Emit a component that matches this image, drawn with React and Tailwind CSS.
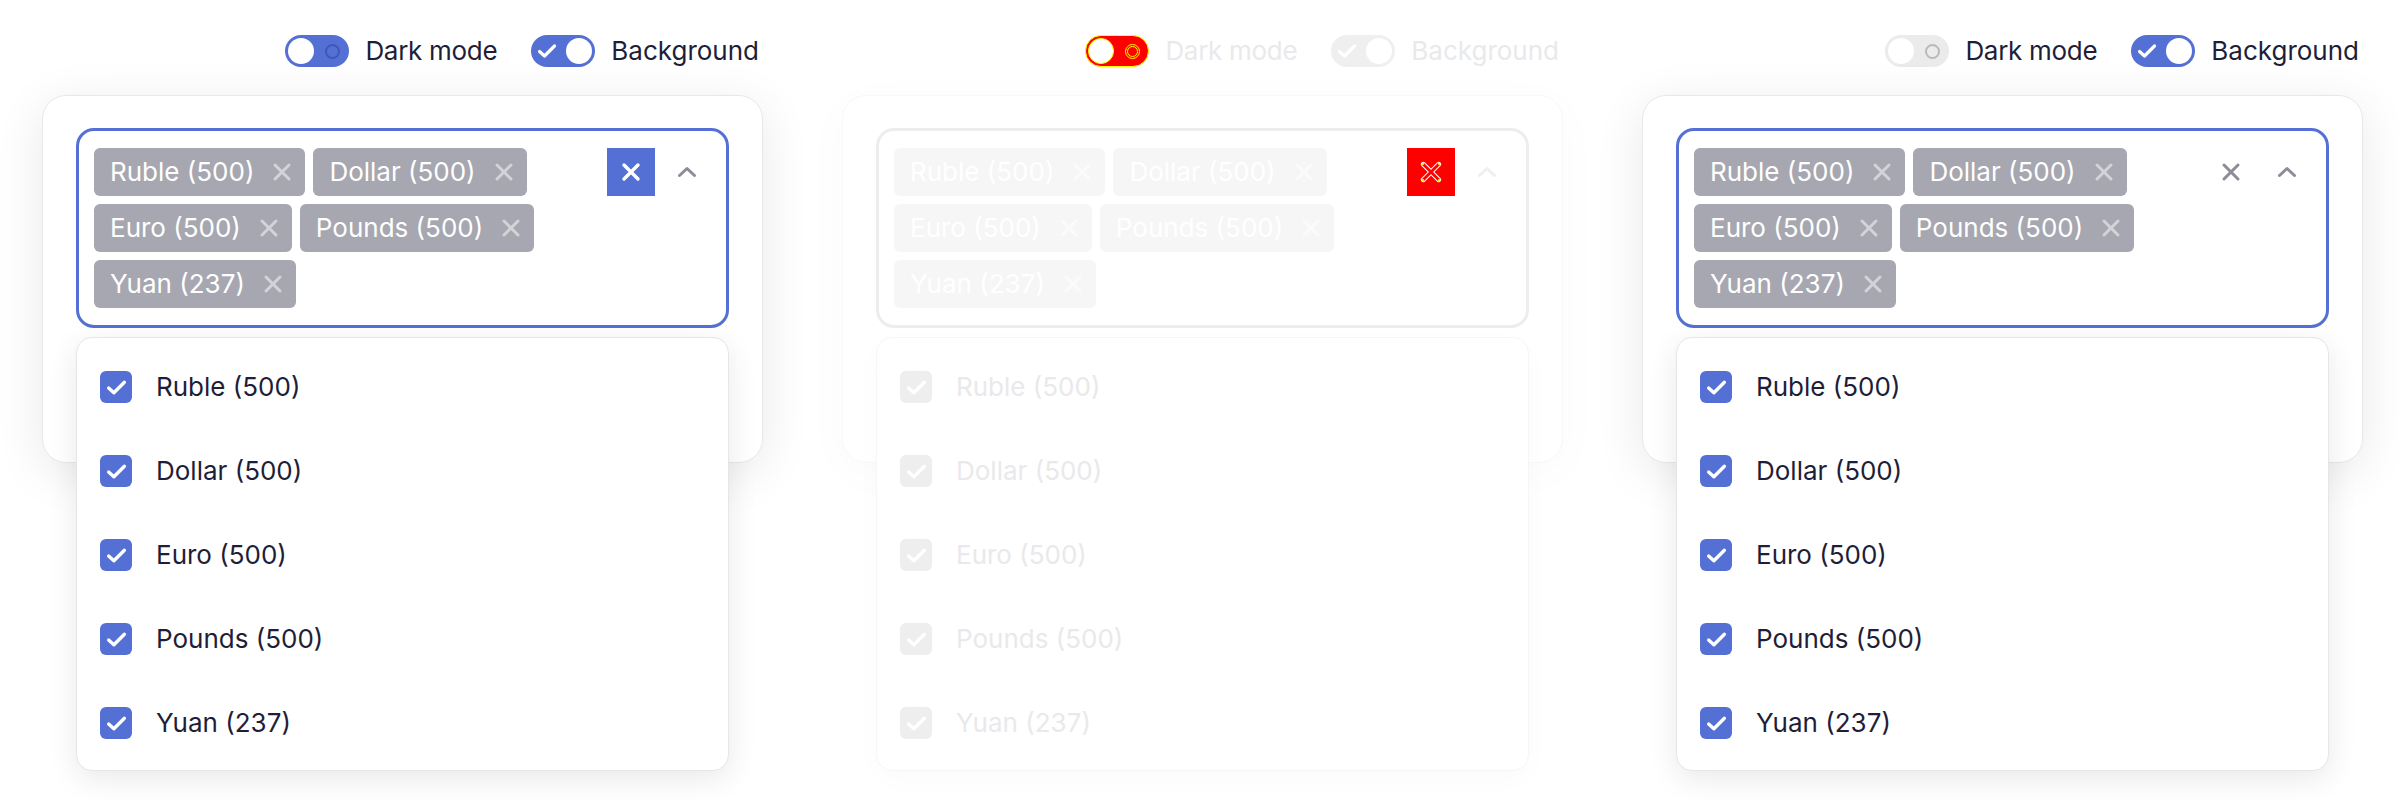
import React from "react";

const ITEMS = ["Ruble (500)", "Dollar (500)", "Euro (500)", "Pounds (500)", "Yuan (237)"];

function XIcon({ className, color, width = 3 }) {
  return (
    <svg viewBox="0 0 20 20" className={className} fill="none">
      <path d="M3 3 L17 17 M17 3 L3 17" stroke={color} strokeWidth={width} strokeLinecap="round" />
    </svg>
  );
}

function Check({ className, color }) {
  return (
    <svg viewBox="0 0 20 16" className={className} fill="none">
      <path d="M2.5 8.5 L7.5 13 L17.5 3" stroke={color} strokeWidth="3.2" strokeLinecap="round" strokeLinejoin="round" />
    </svg>
  );
}

function DarkToggle({ v }) {
  if (v === "b") {
    return (
      <div className="relative w-[64px] h-[32px] rounded-full bg-[#ff0000] border border-[#ffff00] shrink-0">
        <div className="absolute left-[2px] top-[2px] w-[26px] h-[26px] rounded-full bg-white border border-[#ffff00]" />
        <div className="absolute left-[39px] top-[7.5px] w-[15px] h-[15px] rounded-full border border-[#ffff00]" />
        <div className="absolute left-[41px] top-[9.5px] w-[11px] h-[11px] rounded-full border border-[#ffff00]" />
      </div>
    );
  }
  const on = v === "a";
  return (
    <div className={on ? "relative w-[64px] h-[32px] rounded-full bg-[#5470d4] shrink-0" : "relative w-[64px] h-[32px] rounded-full bg-[#ebebeb] shrink-0"}>
      <div className="absolute left-[3px] top-[3px] w-[26px] h-[26px] rounded-full bg-white" />
      <div className={on ? "absolute left-[40px] top-[8.5px] w-[15px] h-[15px] rounded-full border-2 border-[#3f58b6]" : "absolute left-[40px] top-[8.5px] w-[15px] h-[15px] rounded-full border-2 border-[#b9b9bd]"} />
    </div>
  );
}

function BgToggle({ v }) {
  const faded = v === "b";
  return (
    <div className={faded ? "relative w-[64px] h-[32px] rounded-full bg-[#efefef] shrink-0" : "relative w-[64px] h-[32px] rounded-full bg-[#5470d4] shrink-0"}>
      <Check className="absolute left-[6px] top-[8px] w-[20px] h-[16px]" color="#ffffff" />
      <div className="absolute left-[35px] top-[3px] w-[26px] h-[26px] rounded-full bg-white" />
    </div>
  );
}

function Tag({ label, faded }) {
  return (
    <span className={faded ? "flex items-center h-[48px] rounded-[6px] bg-[#f6f6f7] pl-[16px] pr-[13px] text-white" : "flex items-center h-[48px] rounded-[6px] bg-[#a6a7b1] pl-[16px] pr-[13px] text-white"}>
      <span className="text-[26px] leading-none whitespace-nowrap">{label}</span>
      <XIcon className="ml-[18px] w-[20px] h-[20px]" color={faded ? "#fbfbfb" : "#d3d3d8"} width={3} />
    </span>
  );
}

function ClearBtn({ v }) {
  if (v === "a") {
    return (
      <div className="w-[48px] h-[48px] bg-[#5470d4] flex items-center justify-center shrink-0 ml-[8px]">
        <XIcon className="w-[20px] h-[20px]" color="#ffffff" width={3.4} />
      </div>
    );
  }
  if (v === "b") {
    return (
      <div className="w-[48px] h-[48px] bg-[#ff0000] flex items-center justify-center shrink-0 ml-[8px]">
        <svg viewBox="0 0 20 20" className="w-[22px] h-[22px]" fill="none">
          <path d="M3 3 L17 17 M17 3 L3 17" stroke="#ffffff" strokeWidth="4.4" strokeLinecap="round" />
          <path d="M3 3 L17 17 M17 3 L3 17" stroke="#ff0000" strokeWidth="2.6" strokeLinecap="round" />
          <circle cx="2.6" cy="2.6" r="1.1" fill="#ffff00" />
          <circle cx="17.4" cy="2.6" r="1.1" fill="#ffff00" />
          <circle cx="2.6" cy="17.4" r="1.1" fill="#ffff00" />
          <circle cx="17.4" cy="17.4" r="1.1" fill="#ffff00" />
        </svg>
      </div>
    );
  }
  return (
    <div className="w-[48px] h-[48px] flex items-center justify-center shrink-0 ml-[8px]">
      <XIcon className="w-[20px] h-[20px]" color="#8b8c95" width={3} />
    </div>
  );
}

function Column({ v }) {
  const faded = v === "b";
  return (
    <div className="w-[800px] h-[800px] shrink-0 pl-[42px] pt-[35px]">
      <div className="w-[721px] h-[32px] flex items-center justify-end pr-[4px]">
        <DarkToggle v={v} />
        <span className={faded ? "ml-[16px] text-[26px] leading-none tracking-[-0.3px] text-[#e9e9eb]" : "ml-[16px] text-[26px] leading-none tracking-[-0.3px] text-[#1e1e38]"}>Dark mode</span>
        <div className="ml-[34px]">
          <BgToggle v={v} />
        </div>
        <span className={faded ? "ml-[16px] text-[26px] leading-none text-[#e9e9eb]" : "ml-[16px] text-[26px] leading-none text-[#1e1e38]"}>Background</span>
      </div>
      <div className={faded ? "relative mt-[28px] w-[721px] h-[368px] rounded-3xl border border-[#f8f8f8] bg-white pt-[32px] px-[33px] shadow-[0_10px_50px_rgba(0,0,0,0.025)]" : "relative mt-[28px] w-[721px] h-[368px] rounded-3xl border border-[#e8e8e8] bg-white pt-[32px] px-[33px] shadow-[0_10px_50px_rgba(0,0,0,0.09)]"}>
        <div className={faded ? "w-full rounded-[18px] border-[3px] border-[#ededed] flex items-start px-[15px] py-[17px]" : "w-full rounded-[18px] border-[3px] border-[#5470d4] flex items-start px-[15px] py-[17px]"}>
          <div className="flex-1 flex flex-wrap gap-2">
            {ITEMS.map((it) => (
              <Tag key={it} label={it} faded={faded} />
            ))}
          </div>
          <ClearBtn v={v} />
          <div className="w-[48px] h-[48px] flex items-center justify-center shrink-0 ml-[8px]">
            <svg viewBox="0 0 20 12" className="w-[20px] h-[12px]" fill="none">
              <path d="M2.5 9.5 L10 2.5 L17.5 9.5" stroke={faded ? "#efeff0" : "#8b8c95"} strokeWidth="3" strokeLinecap="round" strokeLinejoin="round" />
            </svg>
          </div>
        </div>
        <div className={faded ? "absolute left-[33px] top-[241px] w-[653px] rounded-2xl border border-[#f6f6f6] bg-white pt-[7px] pb-[5px] shadow-[0_8px_30px_rgba(0,0,0,0.02)]" : "absolute left-[33px] top-[241px] w-[653px] rounded-2xl border border-[#e6e6e6] bg-white pt-[7px] pb-[5px] shadow-[0_8px_30px_rgba(0,0,0,0.09)]"}>
          {ITEMS.map((it) => (
            <div key={it} className="h-[84px] flex items-center pl-[23px]">
              <div className={faded ? "w-[32px] h-[32px] rounded-[6px] bg-[#eeeeee] flex items-center justify-center" : "w-[32px] h-[32px] rounded-[6px] bg-[#5470d4] flex items-center justify-center"}>
                <Check className="w-[21px] h-[17px]" color="#ffffff" />
              </div>
              <span className={faded ? "ml-[24px] text-[26px] leading-none text-[#e9e9eb]" : "ml-[24px] text-[26px] leading-none text-[#1e1e38]"}>{it}</span>
            </div>
          ))}
        </div>
      </div>
    </div>
  );
}

export default function App() {
  return (
    <div className="flex w-[2400px] h-[800px] bg-white overflow-hidden font-['Inter',sans-serif]">
      <Column v="a" />
      <Column v="b" />
      <Column v="c" />
    </div>
  );
}
